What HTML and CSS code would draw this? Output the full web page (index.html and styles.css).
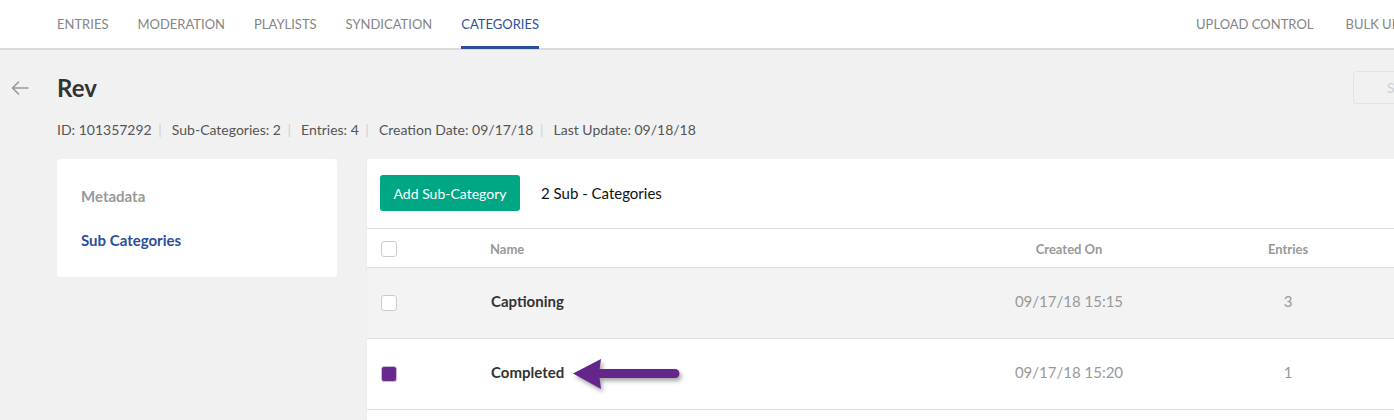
FILE: index.html
```html
<!DOCTYPE html>
<html lang="en">
	<head>
		<meta charset="UTF-8" />
		<meta name="viewport" content="width=device-width, initial-scale=1.0" />
		<title>Categories - Rev</title>
		<link rel="stylesheet" href="styles.css">
	</head>
	<body>
		<div class="page">
			<nav class="topnav">
				<div class="topnav-left">
					<a class="nav-link">Entries</a>
					<a class="nav-link">Moderation</a>
					<a class="nav-link">Playlists</a>
					<a class="nav-link">Syndication</a>
					<a class="nav-link active">Categories</a>
				</div>
				<div class="topnav-right">
					<a class="nav-link">Upload Control</a>
					<a class="nav-link">Bulk Upload Log</a>
				</div>
			</nav>

			<div class="content">
				<div class="page-head">
					<div class="title-wrap">
						<button class="back-btn" aria-label="Back">
							<svg width="18" height="14" viewBox="0 0 18 14">
								<path d="M17 7H1.5M7.5 1L1.5 7l6 6" fill="none" stroke="#999" stroke-width="1.6" stroke-linecap="round" stroke-linejoin="round"/>
							</svg>
						</button>
						<h1 class="page-title">Rev</h1>
					</div>
					<button class="save-btn" disabled>Save</button>
				</div>

				<div class="meta">
					<span>ID: 101357292</span><span class="sep">|</span>
					<span>Sub-Categories: 2</span><span class="sep">|</span>
					<span>Entries: 4</span><span class="sep">|</span>
					<span>Creation Date: 09/17/18</span><span class="sep">|</span>
					<span>Last Update: 09/18/18</span>
				</div>

				<div class="panels">
					<aside class="side-menu">
						<a class="side-link">Metadata</a>
						<a class="side-link active">Sub Categories</a>
					</aside>

					<section class="main-panel">
						<div class="toolbar">
							<button class="btn-add">Add Sub-Category</button>
							<span class="count">2 Sub - Categories</span>
						</div>

						<div class="table">
							<div class="row head">
								<div class="cell check"><span class="checkbox"></span></div>
								<div class="cell name">Name</div>
								<div class="cell center">Created On</div>
								<div class="cell center">Entries</div>
							</div>
							<div class="row hover">
								<div class="cell check"><span class="checkbox"></span></div>
								<div class="cell name">Captioning</div>
								<div class="cell center">09/17/18 15:15</div>
								<div class="cell center">3</div>
							</div>
							<div class="row">
								<div class="cell check"><span class="checkbox checked"></span></div>
								<div class="cell name">Completed</div>
								<div class="cell center">09/17/18 15:20</div>
								<div class="cell center">1</div>
								<svg class="callout-arrow" width="120" height="44" viewBox="0 0 120 44">
									<path d="M31 19.5H106" stroke="#64268a" stroke-width="9" stroke-linecap="round"/>
									<path d="M4 19.5L32 5L30 19.5L32 35Z" fill="#64268a"/>
								</svg>
							</div>
						</div>
					</section>
				</div>
			</div>
		</div>
	</body>
</html>
```

FILE: styles.css
```css
body {
	margin: 0;
	font-family: "Lato", "Open Sans", sans-serif;
	background-color: #f1f1f1;
	color: #333;
	overflow: hidden;
}
.page {
	width: 1500px;
}
.topnav {
	display: flex;
	justify-content: space-between;
	height: 48px;
	background-color: #fff;
	border-bottom: 2px solid #dadada;
	padding-left: 57px;
}
.topnav-left,
.topnav-right {
	display: flex;
	gap: 29px;
}
.topnav-right {
	gap: 32px;
	padding-right: 36px;
}
.nav-link {
	display: flex;
	align-items: center;
	padding-top: 2px;
	font-size: 13px;
	text-transform: uppercase;
	color: #858585;
	border-bottom: 3px solid transparent;
	margin-bottom: -1px;
}
.nav-link.active {
	color: #2c4f9b;
	border-bottom-color: #2c4f9b;
}
.content {
	padding: 21px 0 0 11px;
}
.page-head {
	display: flex;
	justify-content: space-between;
	align-items: center;
	height: 33px;
}
.title-wrap {
	display: flex;
	align-items: center;
}
.back-btn {
	width: 46px;
	padding: 0;
	border: none;
	background: none;
	text-align: left;
	line-height: 0;
}
.page-title {
	margin: 0;
	font-size: 24px;
	font-weight: 700;
	color: #333;
	line-height: 1;
}
.save-btn {
	width: 136px;
	height: 33px;
	margin-right: 11px;
	border: 1px solid #e4e4e4;
	border-radius: 3px;
	background: #f1f1f1;
	color: #cfcfcf;
	font-family: inherit;
	font-size: 14px;
	text-align: left;
	padding-left: 33px;
}
.meta {
	margin: 16px 0 0 46px;
	font-size: 14px;
	line-height: 20px;
	color: #555;
}
.meta .sep {
	margin: 0 6.5px;
	color: #d0d0d0;
}
.panels {
	display: flex;
	align-items: flex-start;
	gap: 29px;
	margin: 19px 0 0 46px;
}
.side-menu {
	width: 280px;
	height: 118px;
	background-color: #fff;
	border-radius: 4px;
	padding: 27px 24px 0;
	box-sizing: border-box;
}
.side-link {
	display: block;
	font-size: 15px;
	font-weight: 700;
	color: #999;
	line-height: 20px;
	margin-bottom: 24px;
}
.side-link.active {
	color: #2c4f9b;
}
.main-panel {
	flex: 1;
	min-height: 300px;
	background-color: #fff;
	border-left: 1px solid #ececec;
	border-radius: 4px 0 0 0;
	margin-right: 11px;
}
.toolbar {
	display: flex;
	align-items: center;
	gap: 21px;
	height: 69px;
	padding-left: 13px;
	border-bottom: 1px solid #dedede;
}
.btn-add {
	height: 36px;
	width: 140px;
	margin-top: -1px;
	border: none;
	border-radius: 3px;
	background-color: #00a784;
	color: #fff;
	font-family: inherit;
	font-size: 14px;
}
.count {
	font-size: 15px;
	color: #111;
	margin-top: -1px;
}
.row {
	position: relative;
	display: grid;
	grid-template-columns: 123px 470px 218px 220px;
	align-items: center;
	height: 70px;
	border-bottom: 1px solid #dedede;
	font-size: 15px;
	color: #999;
}
.row.head {
	height: 38px;
	font-size: 13px;
	font-weight: 700;
	color: #999;
}
.row.head .cell {
	padding-top: 2px;
}
.row.hover {
	background-color: #f3f3f3;
}
.cell.check {
	padding-left: 14px;
	line-height: 0;
}
.cell.center {
	text-align: center;
}
.row:not(.head) .cell.name {
	font-weight: 700;
	color: #333;
	padding-left: 1px;
	margin-top: -4px;
}
.row:not(.head) .cell.center {
	margin-top: -4px;
}
.checkbox {
	display: inline-block;
	width: 14px;
	height: 14px;
	border: 1px solid #ccc;
	border-radius: 3px;
	background-color: #fff;
}
.checkbox.checked {
	background-color: #68288e;
	border-color: #c9bcd3;
}
.callout-arrow {
	position: absolute;
	left: 202px;
	top: 15px;
	filter: drop-shadow(2px 3px 2px rgba(0, 0, 0, 0.35));
}
```
